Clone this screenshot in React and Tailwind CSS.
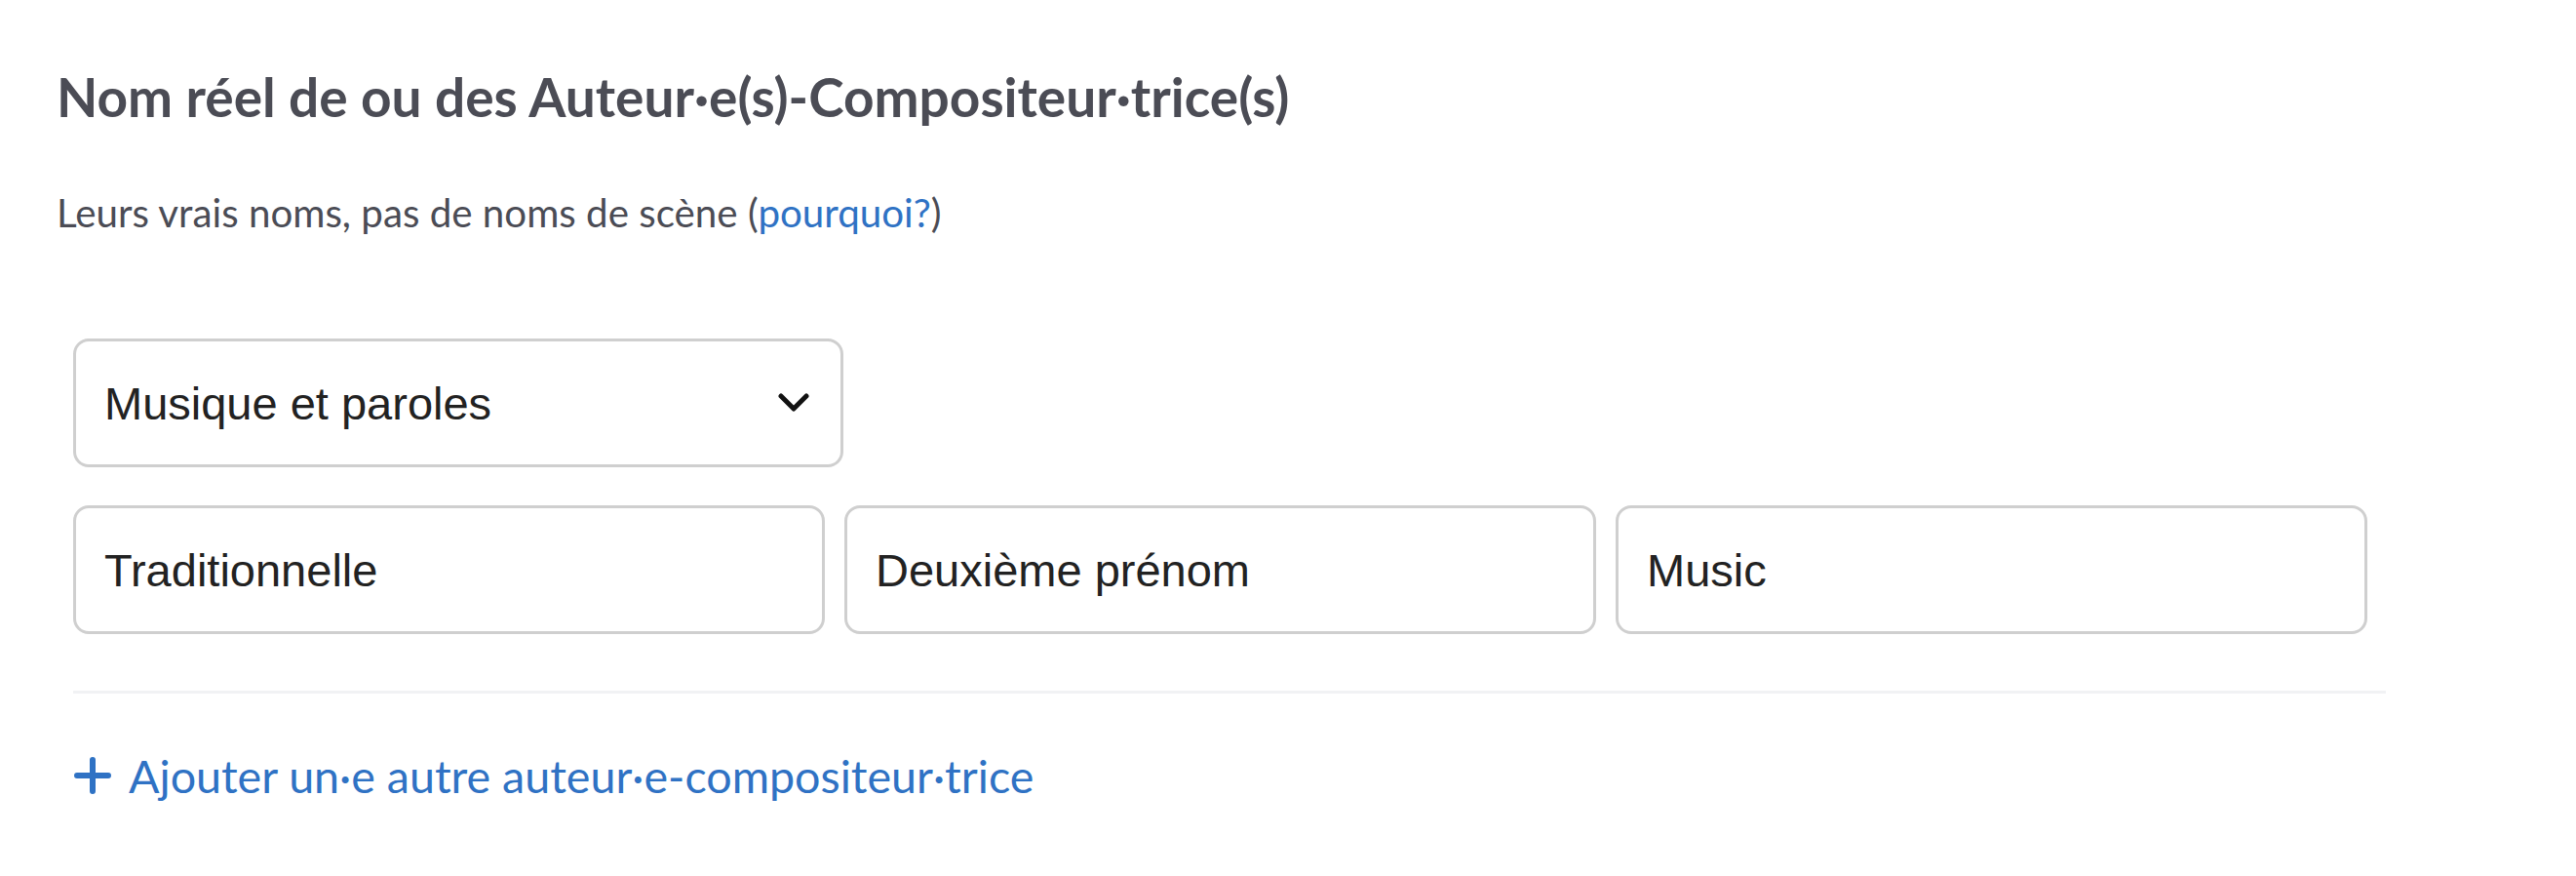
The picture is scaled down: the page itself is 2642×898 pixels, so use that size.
export default function App() {
  const names = ["Traditionnelle", "Deuxième prénom", "Music"];

  return (
    <div className="min-h-[898px] w-[2642px] bg-white pt-[67px] font-['Lato','Noto_Sans',sans-serif]">
      <h1 className="pl-[58px] text-[55px] font-bold leading-[64px] text-[#4b4c55]">
        Nom réel de ou des Auteur·e(s)-Compositeur·trice(s)
      </h1>
      <p className="mt-[63px] pl-[58px] text-[40.3px] leading-[48px] text-[#4b4c55]">
        Leurs vrais noms, pas de noms de scène (
        <a href="#" className="text-[#2f72c4]">
          pourquoi?
        </a>
        )
      </p>

      <div className="ml-[75px] mt-[105px] w-[2372px]">
        <div className="flex h-[132px] w-[790px] items-center justify-between rounded-[16px] border-[3px] border-[#cfcfcf] pl-[29px] pr-[32px] font-['Liberation_Sans',Arial,sans-serif] text-[47px] text-[#222]">
          <span className="pt-[2px]">Musique et paroles</span>
          <svg width="32" height="20" viewBox="0 0 32 20" fill="none">
            <polyline
              points="3,3 16,16 29,3"
              stroke="#111"
              strokeWidth="5"
              strokeLinecap="round"
              strokeLinejoin="round"
            />
          </svg>
        </div>

        <div className="mt-[39px] flex gap-[20px]">
          {names.map((n) => (
            <div
              key={n}
              className="flex h-[132px] w-[771px] items-center rounded-[16px] border-[3px] border-[#cfcfcf] pl-[29px] pt-[2px] font-['Liberation_Sans',Arial,sans-serif] text-[47px] text-[#222]"
            >
              {n}
            </div>
          ))}
        </div>

        <div className="mt-[58px] h-[3px] bg-[#f1f2f4]" />

        <a href="#" className="mt-[56px] flex items-center gap-[18px] text-[46.6px] leading-[56px] text-[#2f72c4]">
          <svg width="38" height="38" viewBox="0 0 38 38" fill="none" className="ml-[1px]">
            <path d="M19 3v32M3 19h32" stroke="#2f72c4" strokeWidth="6" strokeLinecap="round" />
          </svg>
          <span>Ajouter un·e autre auteur·e-compositeur·trice</span>
        </a>
      </div>
    </div>
  );
}
